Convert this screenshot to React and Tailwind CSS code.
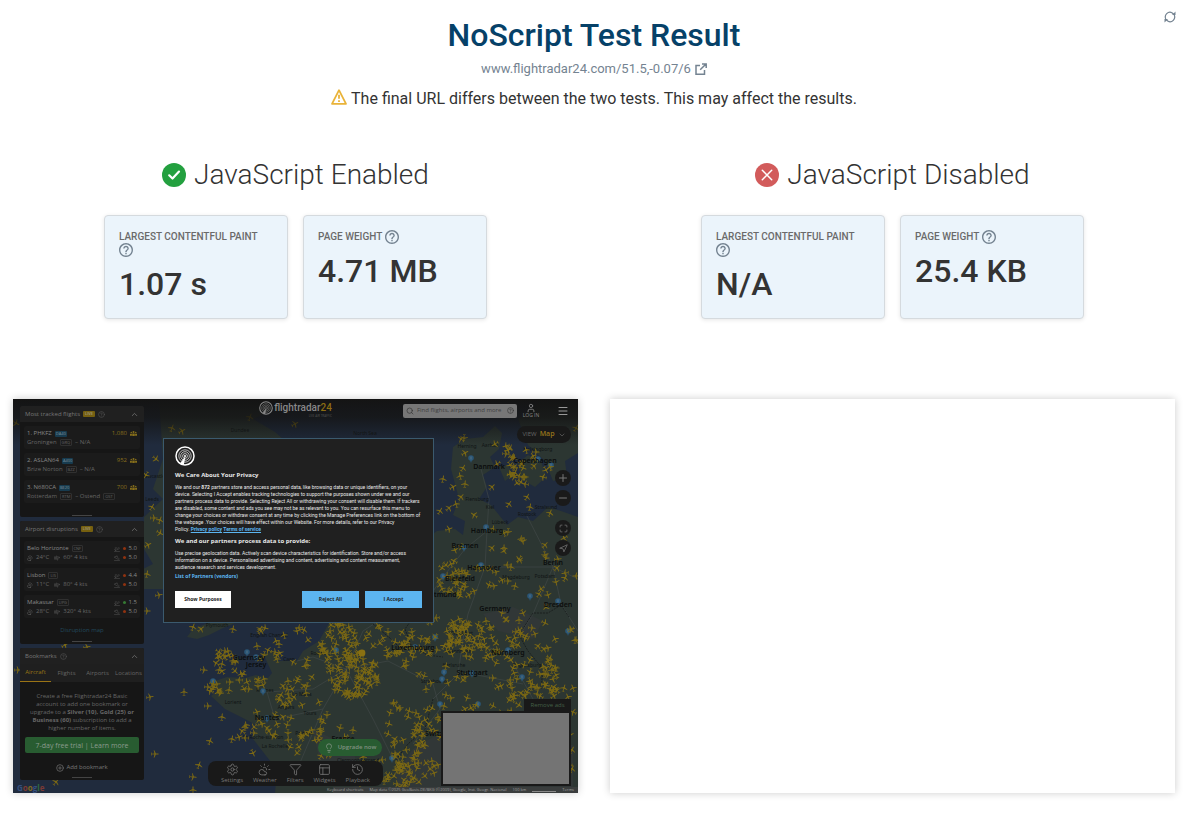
import React from "react";
import {
  ChevronUp,
  ChevronDown,
  Search,
  Plus,
  Minus,
  Maximize,
  Navigation,
  Settings,
  CloudSun,
  Filter,
  PanelsTopLeft,
  History,
  CirclePlus,
  CircleHelp,
  Lightbulb,
  User,
  Menu,
  Wind,
  PlaneTakeoff,
  PlaneLanding,
} from "lucide-react";

const RESULTS = [
  {
    title: "JavaScript Enabled",
    ok: true,
    metrics: [
      { label: "Largest Contentful Paint", value: "1.07 s" },
      { label: "Page Weight", value: "4.71 MB" },
    ],
  },
  {
    title: "JavaScript Disabled",
    ok: false,
    metrics: [
      { label: "Largest Contentful Paint", value: "N/A" },
      { label: "Page Weight", value: "25.4 KB" },
    ],
  },
];

const FLIGHTS = [
  { name: "1. PHKFZ", type: "DA40", from: "Groningen", fromCode: "GRQ", to: "– N/A", count: "1,080" },
  { name: "2. ASLAN64", type: "A400", from: "Brize Norton", fromCode: "BZZ", to: "– N/A", count: "952" },
  { name: "3. N680CA", type: "BE20", from: "Rotterdam", fromCode: "RTM", to: "– Ostend", toCode: "OST", count: "700" },
];

const AIRPORTS = [
  { name: "Belo Horizonte", code: "CNF", temp: "24°C", wind: "60° 4 kts", out: "5.0", inn: "5.0", bad: true },
  { name: "Lisbon", code: "LIS", temp: "11°C", wind: "80° 4 kts", out: "4.4", inn: "5.0", bad: true },
  { name: "Makassar", code: "UPG", temp: "28°C", wind: "320° 4 kts", out: "1.5", inn: "5.0", bad: false },
];

const PRIVACY_LINES = [
  "device. Selecting I Accept enables tracking technologies to support the purposes shown under we and our",
  "partners process data to provide. Selecting Reject All or withdrawing your consent will disable them. If trackers",
  "are disabled, some content and ads you see may not be as relevant to you. You can resurface this menu to",
  "change your choices or withdraw consent at any time by clicking the Manage Preferences link on the bottom of",
  "the webpage .Your choices will have effect within our Website. For more details, refer to our Privacy",
];

// [cx, cy, rx, ry, count]
const CLUSTERS = [
  [460, 60, 30, 24, 5],
  [515, 68, 22, 18, 28],
  [490, 50, 16, 6, 6],
  [445, 125, 22, 26, 6],
  [490, 135, 22, 20, 8],
  [535, 130, 24, 34, 5],
  [470, 175, 46, 18, 22],
  [530, 175, 36, 22, 12],
  [445, 185, 20, 14, 18],
  [450, 240, 22, 20, 52],
  [490, 240, 26, 26, 26],
  [530, 235, 36, 30, 22],
  [510, 283, 36, 20, 38],
  [545, 280, 18, 26, 14],
  [410, 235, 22, 24, 26],
  [425, 290, 30, 32, 16],
  [390, 330, 18, 34, 18],
  [405, 350, 24, 34, 44],
  [387, 255, 14, 14, 18],
  [340, 275, 26, 24, 76],
  [327, 245, 22, 24, 28],
  [355, 235, 26, 14, 12],
  [305, 235, 26, 22, 10],
  [255, 245, 22, 18, 12],
  [214, 262, 16, 14, 18],
  [204, 290, 14, 12, 10],
  [232, 282, 22, 8, 12],
  [288, 275, 16, 16, 10],
  [265, 310, 22, 28, 18],
  [295, 305, 26, 24, 9],
  [240, 336, 16, 22, 11],
  [290, 338, 20, 18, 16],
  [330, 320, 32, 28, 9],
  [345, 370, 60, 22, 18],
  [385, 380, 16, 12, 20],
  [555, 340, 10, 40, 10],
  [480, 305, 55, 12, 14],
];

const LONE_PLANES = [
  [159, 29, 20], [169, 32, 60], [143, 60, 130], [133, 76, 210], [139, 108, 30],
  [141, 119, 90], [147, 121, 20], [147, 134, 120], [135, 146, 60], [134, 175, 10],
  [146, 196, 80], [134, 212, 90], [180, 228, 20], [188, 230, 50], [191, 271, 95],
  [171, 293, 0], [137, 298, 80], [195, 307, 90], [209, 318, 5], [197, 342, 20],
  [219, 340, 10], [142, 355, 90], [186, 366, 20], [180, 378, 95], [180, 391, 0],
  [43, 383, 40], [430, 80, 10], [427, 112, 30], [440, 88, 60], [448, 98, 40],
  [452, 85, 5], [479, 88, 45], [514, 98, 30], [496, 105, 35], [266, 245, 0],
  [5, 271, 90], [52, 246, 60], [74, 248, 80], [220, 230, 10], [248, 232, 40],
  [3, 24, 120], [450, 69, 30], [237, 18, 20], [282, 25, 60], [563, 29, 30],
];

const BIG_LABELS = [
  ["Danmark", 476, 70], ["Germany", 482, 212], ["France", 330, 342],
  ["Luxembourg", 400, 251], ["Guernsey", 236, 261], ["Jersey", 243, 268],
  ["Nantes", 254, 321], ["Hamburg", 474, 134], ["Bremen", 452, 149],
  ["Hannover", 471, 171], ["Bielefeld", 447, 182], ["Nürnberg", 495, 256],
  ["Stuttgart", 459, 276], ["Dresden", 545, 208], ["Berlin", 540, 166],
  ["Copenhagen", 522, 64], ["Switzerland", 432, 337], ["Dortmund", 426, 198],
];

const SMALL_LABELS = [
  ["Aarhus", 477, 48], ["Herning", 454, 49], ["Helsingborg", 525, 52],
  ["Flensburg", 464, 102], ["Kiel", 477, 110], ["Rostock", 514, 117],
  ["Stralsund", 533, 110], ["Lübeck", 487, 125], ["Plymouth", 204, 228],
  ["Rennes", 252, 293], ["Le Mans", 289, 297], ["Tours", 297, 316],
  ["Angers", 273, 310], ["Lorient", 220, 305], ["Poitiers", 291, 336],
  ["La Rochelle", 262, 349], ["La Roche-sur-Yon", 250, 340], ["Rouen", 305, 256],
  ["Caen", 276, 262], ["Karlsruhe", 441, 268], ["Regensburg", 514, 268],
  ["Potsdam", 532, 179], ["Magdeburg", 503, 180], ["Strasbourg", 421, 284],
  ["Frankfurt", 449, 236], ["Mannheim", 446, 254], ["Clermont-Ferrand", 345, 363],
  ["English Channel", 256, 238], ["North Sea", 352, 36],
  ["Dundee", 227, 33], ["Newcastle", 140, 79], ["Leeds", 139, 102],
];

const PINS = [
  [458, 59], [538, 66], [525, 60], [473, 128], [451, 148], [468, 166], [430, 177],
  [517, 197], [545, 202], [555, 232], [422, 238], [402, 248], [431, 273],
  [459, 274], [429, 280], [509, 278], [495, 251], [465, 305], [427, 305], [234, 253],
  [243, 258], [200, 282], [323, 251], [250, 292], [254, 319], [379, 359], [549, 344],
];

// Small deterministic generator so the traffic looks the same on every load
function scatterPlanes() {
  let seed = 4711;
  const next = () => {
    seed = (seed * 16807) % 2147483647;
    return seed / 2147483647;
  };
  const planes = [];
  CLUSTERS.forEach(([cx, cy, rx, ry, count]) => {
    for (let i = 0; i < count; i++) {
      const a = next() * Math.PI * 2;
      const r = Math.sqrt(next());
      planes.push([
        Math.round(cx + Math.cos(a) * r * rx),
        Math.round(cy + Math.sin(a) * r * ry),
        Math.round(next() * 360),
      ]);
    }
  });
  return planes;
}

const PLANES = [...LONE_PLANES, ...scatterPlanes()];

function TrafficMap() {
  return (
    <svg
      viewBox="0 0 565 394"
      preserveAspectRatio="xMidYMid slice"
      className="absolute inset-0 h-full w-full"
      aria-hidden="true"
    >
      <defs>
        <path
          id="plane"
          d="M0-4 .5-3 .5-.9 3.800 .7 3.800 1.300 .5 .6 .3 2.700 1.400 3.400V3.900L0 3.600-1.400 3.900V3.400L-.3 2.700-.5 .6-3.800 1.300V.7L-.5-.9-.5-3Z"
        />
        <linearGradient id="topShade" x1="0" y1="0" x2="0" y2="1">
          <stop offset="0" stopColor="#141414" />
          <stop offset="0.4" stopColor="#141414" stopOpacity="0.8" />
          <stop offset="1" stopColor="#141414" stopOpacity="0" />
        </linearGradient>
      </defs>
      <rect width="565" height="394" fill="#202b3d" />
      <g fill="#2c3632">
        <path d="M146 0H250L262 10 240 20 262 33 270 40V150L200 190H130V170L140 165 131 150V118L150 100 140 90 150 60Z" />
        <path d="M174 238 180 230 195 224H222L208 230 196 236 184 240Z" />
        <path d="M565 394H262L264 370 254 358 240 340 243 326 228 318 212 310 198 297 206 291 196 284 214 278 232 279 243 276 255 279 259 274 250 254 262 253 266 262 284 262 290 252 306 242 316 224 340 212 400 150 424 132 442 130 450 136 452 122 440 116 446 100 438 70 440 48 452 40 470 38 482 27 489 34 486 50 477 58 482 68 470 76 474 88 466 100 478 106 486 116 494 126 505 118 520 122 535 108 548 112 565 118Z" />
        <path d="M505 64 515 56 528 62 533 78 522 88 508 80Z" />
        <path d="M486 68 495 66 500 76 492 82Z" />
        <path d="M505 20 530 0H565V54L552 62 554 78 540 82 532 62 515 46Z" />
      </g>
      <g fill="#34383a" opacity="0.7">
        <path d="M388 394 382 374 400 350 420 338 450 330 560 346V394Z" />
        <path d="M470 215 500 208 530 222 520 240 485 232ZM300 330 340 350 350 390 310 380Z" />
      </g>
      <g fill="none" stroke="#434a49" strokeWidth="0.6">
        <path d="M333 270 300 258 284 262M333 270 375 262 420 285M333 270 310 310 262 320M333 270 360 320 380 360M333 270 350 232 400 200M310 310 295 345 280 380M254 293 300 290 333 270M262 320 254 293" />
        <path d="M474 132 452 150 430 178M474 132 476 100 468 70M474 132 472 168 455 215 450 240M472 168 540 168 565 180M450 240 445 275 420 300M450 240 495 255 520 300M459 275 510 285M540 168 520 215 495 255M540 168 548 205 565 232M540 168 514 117M430 178 404 215M420 285 427 310 400 345" />
      </g>
      <path
        d="M392 204 402 216 392 230 398 246 414 256 430 258M506 236 520 214 535 214 548 206 556 218M506 236 515 252 530 270 528 290M420 300 412 330 395 345 382 362M360 225 378 240 390 252"
        fill="none"
        stroke="#171b1b"
        strokeWidth="0.8"
        strokeDasharray="2 1"
      />
      <g fill="#101414" fontFamily="Noto Sans, sans-serif" fontSize="5" textAnchor="middle">
        {SMALL_LABELS.map(([name, x, y]) => (
          <text key={name} x={x} y={y}>
            {name}
          </text>
        ))}
      </g>
      {PINS.map(([x, y]) => (
        <g key={`${x}-${y}`}>
          <circle cx={x} cy={y} r="2.8" fill="#2a5677" />
          <path d={`M${x - 1} ${y + 2}L${x} ${y + 5}L${x + 1} ${y + 2}Z`} fill="#2a5677" />
          <path d={`M${x} ${y - 1.5}V${y + 1.5}`} stroke="#6b7d88" strokeWidth="0.7" />
        </g>
      ))}
      <g fill="#7b6814">
        {PLANES.map(([x, y, turn], i) => (
          <use key={i} href="#plane" transform={`translate(${x} ${y}) rotate(${turn})`} />
        ))}
      </g>
      <g fill="#0b0d0d" fontFamily="Noto Sans, sans-serif" fontSize="7" fontWeight="600" textAnchor="middle">
        {BIG_LABELS.map(([name, x, y]) => (
          <text key={name} x={x} y={y}>
            {name}
          </text>
        ))}
      </g>
      <circle cx="349" cy="254" r="3.4" fill="#8a7112" />
      <rect width="565" height="46" fill="url(#topShade)" />
      <rect x="320" y="388" width="245" height="6" fill="#3a3d3d" />
    </svg>
  );
}

function HelpIcon() {
  return (
    <svg viewBox="2 2 20 20" className="inline-block h-3.5 w-3.5 align-middle" fill="#748391" aria-hidden="true">
      <path d="M11 18h2v-2h-2v2zm1-16C6.480 2 2 6.480 2 12s4.480 10 10 10 10-4.480 10-10S17.520 2 12 2zm0 18c-4.410 0-8-3.590-8-8s3.590-8 8-8 8 3.590 8 8-3.590 8-8 8zm0-14c-2.210 0-4 1.790-4 4h2c0-1.100.900-2 2-2s2 .900 2 2c0 2-3 1.750-3 5h2c0-2.250 3-2.500 3-5 0-2.210-1.790-4-4-4z" />
    </svg>
  );
}

function CrowdIcon() {
  return (
    <svg viewBox="0 0 14 10" className="h-[5px] w-[7px]" fill="#88701b" aria-hidden="true">
      <circle cx="7" cy="2" r="2" />
      <circle cx="2.500" cy="3" r="1.500" />
      <circle cx="11.500" cy="3" r="1.500" />
      <path d="M4.500 5H9.500V10H4.500ZM0 5.500H3.800V9.500H0ZM10.200 5.500H14V9.500H10.200Z" />
    </svg>
  );
}

function StatusIcon({ ok }) {
  return (
    <svg viewBox="0 0 24 24" className="h-6 w-6 shrink-0" fill="none" stroke="#fff" aria-hidden="true">
      <circle cx="12" cy="12" r="12" fill={ok ? "#23a03f" : "#d25b5b"} stroke="none" />
      {ok ? (
        <path d="M7.200 12.300 10.500 15.500 17 8.600" strokeWidth="2.200" strokeLinecap="round" strokeLinejoin="round" />
      ) : (
        <path d="M7.300 7.300 16.700 16.700M16.700 7.300 7.300 16.700" strokeWidth="1.500" strokeLinecap="round" />
      )}
    </svg>
  );
}

function Metric({ label, value }) {
  return (
    <div className="h-[104px] w-[184px] rounded border border-[#d5dade] bg-[#ebf4fb] px-[14px] py-[14px] shadow-[0_1px_4px_rgba(0,0,0,0.1)]">
      <div className="text-[10px] leading-[13px] font-medium text-[#6a6a6a] uppercase">
        {label} <HelpIcon />
      </div>
      <div className="mt-2 text-[32px] leading-[38px] font-medium text-[#333]">{value}</div>
    </div>
  );
}

function ResultHeader({ title, ok, metrics }) {
  return (
    <section className="flex flex-col items-center">
      <h2 className="flex items-center gap-2 text-[28px] leading-10 font-light text-[#333]">
        <StatusIcon ok={ok} />
        {title}
      </h2>
      <div className="mt-5 flex gap-[15px]">
        {metrics.map((m) => (
          <Metric key={m.label} {...m} />
        ))}
      </div>
    </section>
  );
}

function WidgetHeader({ title, live }) {
  return (
    <div className="flex h-4 items-center gap-[3px] bg-[#202020] px-[5px] text-[6px] font-medium text-[#777]">
      {title}
      {live && <span className="rounded-[1px] bg-[#76600f] px-[2px] text-[4px] leading-[6px] text-[#aaa]">LIVE</span>}
      <CircleHelp className="h-[7px] w-[7px] text-[#555]" />
      <ChevronUp className="ml-auto h-[9px] w-[9px]" />
    </div>
  );
}

function Code({ children }) {
  return <span className="rounded-[1px] border border-[#303030] px-px text-[4px] leading-[5px] text-[#666]">{children}</span>;
}

function Handle() {
  return <div className="mx-auto h-px w-5 bg-[#444]" />;
}

function Sidebar() {
  return (
    <aside className="absolute top-[7px] left-[7px] flex w-[124px] flex-col gap-1 text-[6px] leading-[9px] text-[#666]">
      <div className="flex h-[111px] flex-col overflow-hidden rounded-[2px] bg-[#161616]">
        <WidgetHeader title="Most tracked flights" live />
        <ul className="flex flex-col gap-1 px-1 pt-1">
          {FLIGHTS.map((f) => (
            <li key={f.name} className="h-[23px] rounded-[2px] bg-[#1b1b1b] px-[3px] pt-[3px]">
              <div className="flex items-center gap-[3px] text-[#888]">
                {f.name}
                <span className="rounded-[1px] bg-[#173b4f] px-px text-[4px] leading-[6px] text-[#7b8f99]">{f.type}</span>
                <span className="ml-auto text-[#88701b]">{f.count}</span>
                <CrowdIcon />
              </div>
              <div className="flex items-center gap-[3px]">
                {f.from}
                <Code>{f.fromCode}</Code>
                {f.to}
                {f.toCode && <Code>{f.toCode}</Code>}
              </div>
            </li>
          ))}
        </ul>
        <div className="mt-auto pb-px">
          <Handle />
        </div>
      </div>

      <div className="flex h-[123px] flex-col overflow-hidden rounded-[2px] bg-[#161616]">
        <WidgetHeader title="Airport disruptions" live />
        <ul className="flex flex-col gap-1 px-1 pt-1">
          {AIRPORTS.map((a) => (
            <li key={a.name} className="h-[23px] rounded-[2px] bg-[#1b1b1b] px-[3px] pt-[3px]">
              <div className="flex items-center gap-[3px] text-[#888]">
                {a.name}
                <Code>{a.code}</Code>
                <PlaneTakeoff className="ml-auto h-[6px] w-[6px] text-[#555]" />
                <span className={a.bad ? "h-[3px] w-[3px] rounded-full bg-[#8f3210]" : "h-[3px] w-[3px] rounded-full bg-[#357a35]"} />
                {a.out}
              </div>
              <div className="flex items-center gap-[3px]">
                <CloudSun className="h-[6px] w-[6px]" />
                {a.temp}
                <Wind className="ml-[2px] h-[6px] w-[6px]" />
                {a.wind}
                <PlaneLanding className="ml-auto h-[6px] w-[6px] text-[#555]" />
                <span className="h-[3px] w-[3px] rounded-full bg-[#8f3210]" />
                <span className="text-[#888]">{a.inn}</span>
              </div>
            </li>
          ))}
        </ul>
        <a href="#disruptions" className="mt-2 text-center text-[#22495d]">
          Disruption map
        </a>
        <div className="mt-auto pb-[2px]">
          <Handle />
        </div>
      </div>

      <div className="flex h-[132px] flex-col overflow-hidden rounded-[2px] bg-[#161616]">
        <WidgetHeader title="Bookmarks" />
        <div className="grid h-[18px] grid-cols-4 bg-[#1f1f1f] text-center text-[6px] leading-[17px]">
          <button className="border-b border-[#9a7415] text-[#9a7415]">Aircraft</button>
          <button>Flights</button>
          <button>Airports</button>
          <button>Locations</button>
        </div>
        <p className="mt-[10px] text-center leading-[8px] whitespace-nowrap">
          Create a free Flightradar24 Basic
          <br />
          account to add one bookmark or
          <br />
          upgrade to a <b>Silver (10), Gold (25) or</b>
          <br />
          <b>Business (60)</b> subscription to add a
          <br />
          higher number of items.
        </p>
        <button className="mx-[5px] mt-[5px] h-4 shrink-0 rounded-[2px] bg-[#285c31] text-[7px] text-[#8b9b8d]">
          7-day free trial | Learn more
        </button>
        <button className="mt-[10px] flex items-center justify-center gap-[2px] text-[#777]">
          <CirclePlus className="h-2 w-2" /> Add bookmark
        </button>
        <div className="mt-auto pb-[2px]">
          <Handle />
        </div>
      </div>
    </aside>
  );
}

function RadarLogo({ className }) {
  return (
    <svg viewBox="0 0 20 20" className={className} fill="none" stroke="currentColor" aria-hidden="true">
      <circle cx="10" cy="10" r="9" strokeWidth="1.500" />
      <circle cx="10" cy="10" r="6.200" strokeWidth="0.700" />
      <circle cx="10" cy="10" r="4.300" strokeWidth="0.700" />
      <circle cx="10" cy="10" r="2.400" strokeWidth="0.700" />
      <path d="M10.500 10 5 17.500 8.800 19Z" fill="currentColor" stroke="none" />
      <circle cx="10" cy="10" r="1" fill="currentColor" stroke="none" />
    </svg>
  );
}

function SiteHeader() {
  return (
    <header className="absolute inset-x-0 top-0 h-[22px]">
      <div className="absolute inset-x-0 top-[2px] flex justify-center">
        <div className="flex items-start gap-px text-[#888]">
          <RadarLogo className="h-[14px] w-[14px]" />
          <div className="flex flex-col items-end">
            <span className="font-['Roboto'] text-[10px] leading-[14px] font-medium">
              flightradar<span className="text-[#8c6d12]">24</span>
            </span>
            <span className="text-[3px] leading-[3px] text-[#555]">LIVE AIR TRAFFIC</span>
          </div>
        </div>
      </div>
      <div className="absolute top-1 right-[9px] flex items-center">
        <label className="flex h-[14px] w-[114px] items-center gap-[3px] rounded-[2px] bg-[#777] px-[3px] text-[#333]">
          <Search className="h-2 w-2 shrink-0" />
          <input
            aria-label="Find flights, airports and more"
            placeholder="Find flights, airports and more"
            className="min-w-0 flex-1 text-[6px] placeholder:text-[#404040]"
          />
          <CircleHelp className="h-[7px] w-[7px] shrink-0" />
        </label>
        <button className="ml-1 flex w-5 flex-col items-center text-[5px] leading-[5px] whitespace-nowrap text-[#888]">
          <User className="h-[10px] w-[10px]" />
          LOG IN
        </button>
        <button aria-label="Menu" className="ml-4 text-[#999]">
          <Menu className="h-3 w-3" />
        </button>
      </div>
    </header>
  );
}

function PrivacyDialog() {
  return (
    <div
      role="dialog"
      aria-label="We Care About Your Privacy"
      className="absolute top-[39px] left-[150px] h-[185px] w-[271px] border border-[#3b5a6e] bg-[#202020] px-[11px] pt-[7px] text-[5px] leading-[7px] whitespace-nowrap text-[#e8e8e8]"
    >
      <RadarLogo className="h-5 w-5 text-white" />
      <h3 className="mt-[5px] text-[6px] leading-[9px] font-bold">We Care About Your Privacy</h3>
      <p className="mt-1 font-['Roboto']">
        We and our <b>872</b> partners store and access personal data, like browsing data or unique identifiers, on your
        <br />
        {PRIVACY_LINES.map((line) => (
          <React.Fragment key={line}>
            {line}
            <br />
          </React.Fragment>
        ))}
        Policy.{" "}
        <a href="#privacy" className="font-bold text-[#5cb5f0] underline">
          Privacy policy
        </a>{" "}
        <a href="#terms" className="font-bold text-[#5cb5f0] underline">
          Terms of service
        </a>
      </p>
      <h3 className="mt-1 text-[6px] leading-[9px] font-bold">We and our partners process data to provide:</h3>
      <p className="mt-1 font-['Roboto']">
        Use precise geolocation data. Actively scan device characteristics for identification. Store and/or access
        <br />
        information on a device. Personalised advertising and content, advertising and content measurement,
        <br />
        audience research and services development.
      </p>
      <a href="#partners" className="mt-[2px] block font-bold text-[#5cb5f0]">
        List of Partners (vendors)
      </a>
      <div className="mt-[11px] flex gap-[6px] font-bold text-[#222]">
        <button className="mr-auto h-[17px] w-14 bg-white">Show Purposes</button>
        <button className="h-[17px] w-[57px] bg-[#5cb5f0]">Reject All</button>
        <button className="h-[17px] w-[57px] bg-[#5cb5f0]">I Accept</button>
      </div>
    </div>
  );
}

const MAP_TOOLS = [
  ["Settings", Settings],
  ["Weather", CloudSun],
  ["Filters", Filter],
  ["Widgets", PanelsTopLeft],
  ["Playback", History],
];

function MapControls() {
  const round = "flex h-4 w-4 items-center justify-center rounded-full bg-[#1a1a1a] text-[#777]";
  return (
    <>
      <button className="absolute top-[27px] right-[7px] flex h-[17px] w-[54px] items-center justify-center gap-[3px] rounded-full bg-[#191919] text-[6px] text-[#666]">
        VIEW <span className="text-[7px] font-semibold text-[#97751a]">Map</span>
        <ChevronDown className="h-2 w-2" />
      </button>
      <div className="absolute top-[71px] right-[7px] flex flex-col gap-1">
        <button aria-label="Zoom in" className={round}><Plus className="h-3 w-3" /></button>
        <button aria-label="Zoom out" className={round}><Minus className="h-3 w-3" /></button>
        <button aria-label="Full screen" className={`${round} mt-[10px]`}><Maximize className="h-[9px] w-[9px]" /></button>
        <button aria-label="My location" className={round}><Navigation className="h-[9px] w-[9px]" /></button>
      </div>
      <button className="absolute bottom-[37px] left-[305px] flex h-[17px] w-16 items-center justify-center gap-1 rounded-full bg-[#285c31] text-[6px] font-semibold text-[#809181]">
        <Lightbulb className="h-[10px] w-[10px]" /> Upgrade now
      </button>
      <nav className="absolute bottom-[7px] left-[195px] flex h-[25px] w-[175px] items-center justify-around rounded-[8px] bg-[#191919] px-2 text-[6px] leading-[8px] text-[#777]">
        {MAP_TOOLS.map(([name, Icon]) => (
          <button key={name} className="flex flex-col items-center">
            <Icon className="h-[13px] w-[13px]" strokeWidth={1.5} />
            {name}
          </button>
        ))}
      </nav>
      <div className="absolute right-[7px] bottom-[7px] flex flex-col items-end">
        <button className="h-3 w-[47px] bg-[#191919] text-[6px] text-[#446047]">Remove ads</button>
        <div className="h-[75px] w-[130px] border-2 border-[#191919] bg-[#747474]" />
      </div>
      <div className="absolute bottom-0 left-1 text-[8px] leading-[11px] font-bold text-[#555]">
        <span className="text-[#35507f]">G</span>
        <span className="text-[#7a3a35]">o</span>
        <span className="text-[#7d6a22]">o</span>
        <span className="text-[#35507f]">g</span>
        <span className="text-[#2f6a3f]">l</span>
        <span className="text-[#7a3a35]">e</span>
      </div>
      <div className="absolute right-1 bottom-0 flex gap-[6px] text-[4px] leading-[6px] whitespace-nowrap text-[#a0a0a0]">
        <span>Keyboard shortcuts</span>
        <span>Map data ©2025 GeoBasis-DE/BKG (©2009), Google, Inst. Geogr. Nacional</span>
        <span>100 km</span>
        <span className="mb-px w-6 border-b border-[#888]" />
        <span>Terms</span>
      </div>
    </>
  );
}

const frame = "relative aspect-[565/394] overflow-hidden shadow-[0_0_8px_rgba(0,0,0,0.2)]";

export default function App() {
  return (
    <main className="relative bg-white pr-[14px] pb-6 pl-[13px] font-['Roboto',sans-serif] text-[#333]">
      <button aria-label="Run again" className="absolute top-[11px] right-[13px] text-[#748391]">
        <svg viewBox="0 0 24 24" className="h-3 w-3" fill="none" stroke="currentColor" strokeWidth="2.4">
          <path d="M3.500 16A9.500 9.500 0 0 1 16 3.400M20.500 8A9.500 9.500 0 0 1 8 20.600" />
          <path d="M16 8H23V1ZM8 16H1V23Z" fill="currentColor" stroke="none" />
          <path d="M16 3.400 20 7M8 20.600 4 17" />
        </svg>
      </button>

      <header className="flex flex-col items-center pt-4">
        <h1 className="text-[32px] leading-[38px] font-medium text-[#064168]">NoScript Test Result</h1>
        <a href="#tested-page" className="mt-[5px] flex items-center gap-1 text-[13px] leading-5 text-[#748391]">
          www.flightradar24.com/51.5,-0.07/6
          <svg viewBox="0 0 12 12" className="h-3 w-3" fill="none" stroke="currentColor" strokeWidth="1.5" aria-hidden="true">
            <path d="M5 2.500H1V11.250H9.500V7M7 .9H11.200V5M11 1 5.200 6.800" />
          </svg>
        </a>
        <p className="mt-2 flex items-center gap-1 text-[16px] leading-6">
          <svg viewBox="0 0 16 16" className="mb-1 h-4 w-4" fill="none" stroke="#e9b339" strokeWidth="1.800" strokeLinejoin="round" aria-hidden="true">
            <path d="M8 1.200 15 14.800H1Z" />
            <path d="M8 5.800V9.800M8 11.200V13" />
          </svg>
          The final URL differs between the two tests. This may affect the results.
        </p>
      </header>

      <div className="mt-11 grid grid-cols-2 gap-x-8 gap-y-20">
        {RESULTS.map((r) => (
          <ResultHeader key={r.title} {...r} />
        ))}
        <div className={`${frame} bg-[#202b3d] font-['Open_Sans',sans-serif]`}>
          <TrafficMap />
          <SiteHeader />
          <Sidebar />
          <MapControls />
          <PrivacyDialog />
        </div>
        <div className={`${frame} bg-white`} />
      </div>
    </main>
  );
}
